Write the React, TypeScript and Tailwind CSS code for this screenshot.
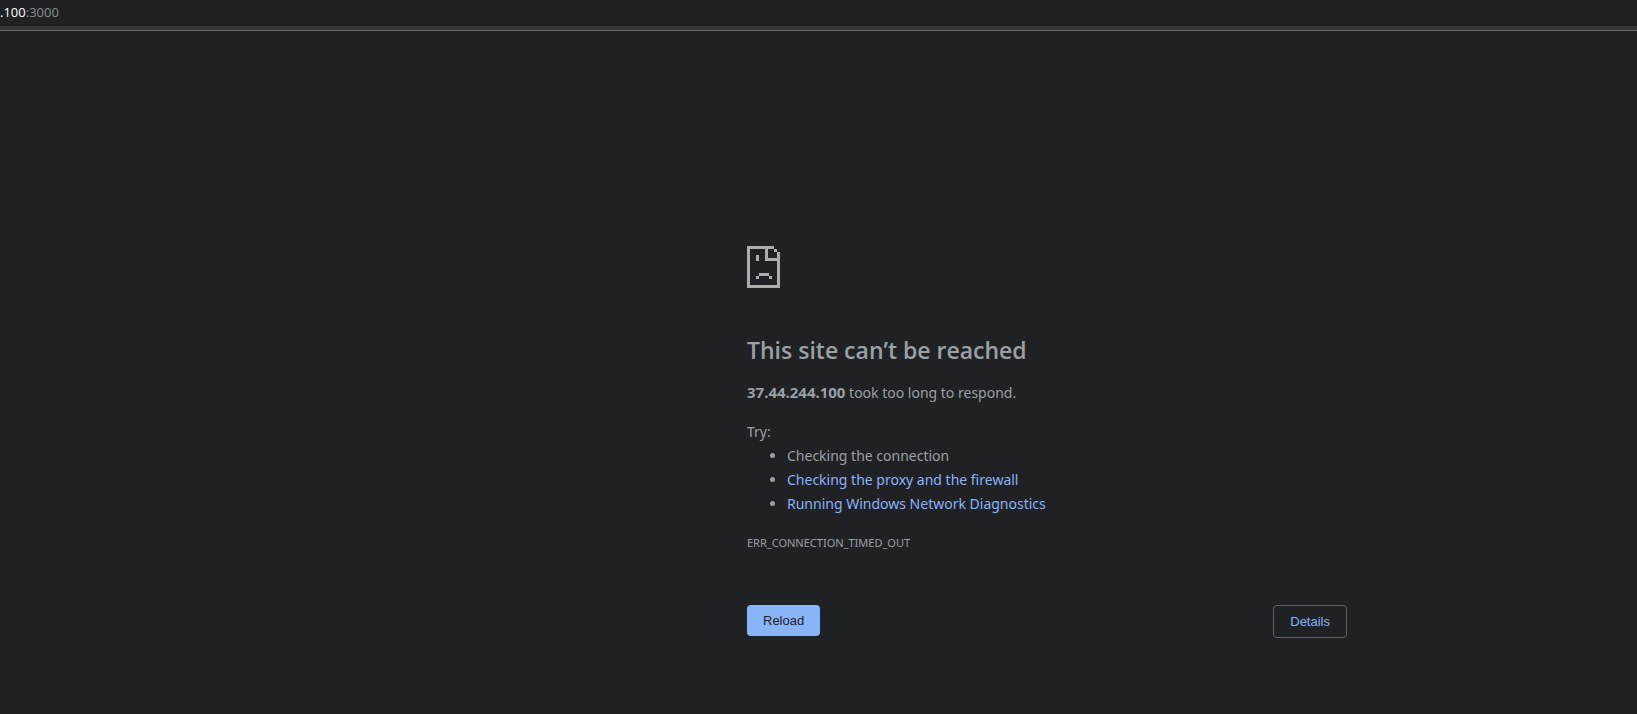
import React from 'react';

interface Suggestion {
  text: string;
  href?: string;
}

const suggestions: Suggestion[] = [
  { text: 'Checking the connection' },
  { text: 'Checking the proxy and the firewall', href: '#firewall' },
  { text: 'Running Windows Network Diagnostics', href: '#diagnostics' },
];

const SadPageIcon: React.FC = () => (
  <svg
    width="33"
    height="42"
    viewBox="0 0 33 42"
    fill="#acacac"
    shapeRendering="crispEdges"
    aria-hidden="true"
  >
    {/* sheet outline */}
    <path d="M0 0h27v3H3v36h27V6h3v36H0z" />
    {/* folded corner */}
    <path d="M18 3h3v9h9v3H18zM27 3h3v3h-3z" />
    {/* face */}
    <path d="M9 9h3v6H9zM12 27h10v3H12zM9 30h3v3H9zM22 30h3v3h-3z" />
  </svg>
);

const App: React.FC = () => {
  return (
    <div className="min-h-screen bg-[#202124] font-['Noto_Sans','Open_Sans',sans-serif] text-[#9aa0a6]">
      <header className="border-b border-[#6b6c6f] bg-[#202124]">
        <div className="h-[26px] font-['Open_Sans','Noto_Sans',sans-serif] text-[13px] leading-6 text-[#8b8e92]">
          <span className="text-white">.100</span>:3000
        </div>
        <div className="h-1 bg-[#35363a]" />
      </header>

      <main className="pt-[215px] pb-16 pl-[457px]">
        <div className="mx-auto max-w-[600px] text-sm leading-6">
          <SadPageIcon />
          <h1 className="mt-[47px] font-['Open_Sans','Noto_Sans',sans-serif] text-[23px] leading-[30px] font-semibold">
            This site can’t be reached
          </h1>
          <p className="mt-[15px]">
            <strong className="text-[15px] leading-6 font-bold">37.44.244.100</strong> took too long to respond.
          </p>
          <p className="mt-[15px]">Try:</p>
          <ul className="list-disc pl-10">
            {suggestions.map((item) => (
              <li key={item.text}>
                {item.href ? (
                  <a href={item.href} className="text-[#8ab4f8]">
                    {item.text}
                  </a>
                ) : (
                  item.text
                )}
              </li>
            ))}
          </ul>
          <p className="mt-[15px] text-[11px] leading-6">ERR_CONNECTION_TIMED_OUT</p>

          <div className="mt-[50px] flex items-start justify-between font-['Liberation_Sans',Arial,sans-serif] text-[13px] leading-[15px]">
            <button type="button" className="rounded bg-[#8ab4f8] px-4 py-2 text-[#202124]">
              Reload
            </button>
            <button
              type="button"
              className="rounded border border-[#5f6368] px-4 py-2 text-[#8ab4f8]"
            >
              Details
            </button>
          </div>
        </div>
      </main>
    </div>
  );
};

export default App;
